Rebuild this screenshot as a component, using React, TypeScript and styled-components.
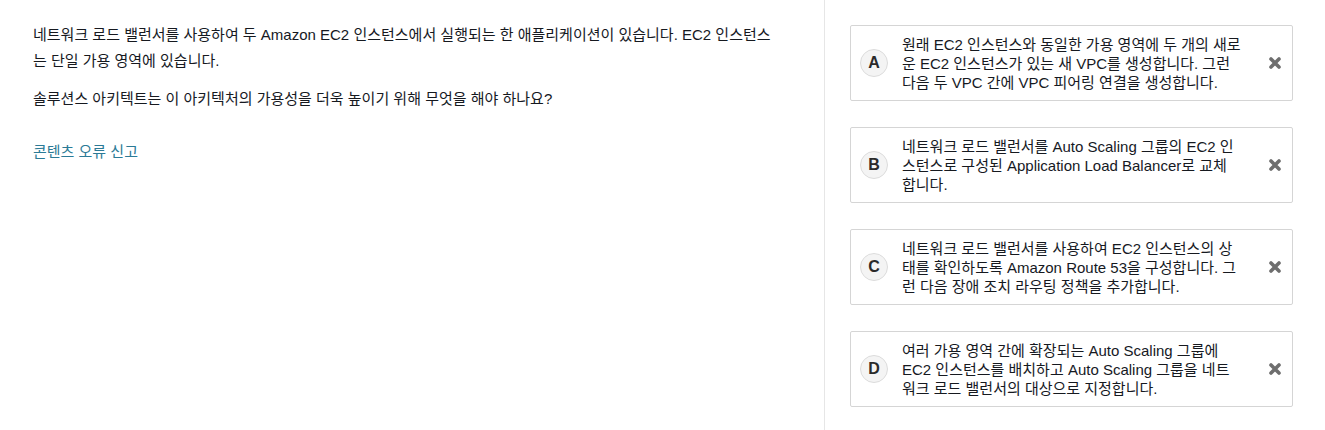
import React from "react";
import styled, { createGlobalStyle } from "styled-components";

const Global = createGlobalStyle`
  html, body { margin: 0; padding: 0; background: #fff; }
  body {
    font-family: "Liberation Sans", Arial, "Noto Sans CJK KR", sans-serif;
    color: #16191f;
    -webkit-font-smoothing: antialiased;
  }
`;

const Page = styled.div`
  display: flex;
  width: 1325px;
  min-height: 430px;
`;

const QuestionPane = styled.section`
  width: 825px;
  box-sizing: border-box;
  padding: 22px 33px 0 33px;
  border-right: 1px solid #e6e6e6;
`;

const QuestionBody = styled.div`
  max-width: 745px;
`;

const Para = styled.p`
  margin: 0 0 12px 0;
  font-size: 15px;
  line-height: 26px;
`;

const ReportLink = styled.a`
  display: inline-block;
  margin-top: 18px;
  font-size: 15px;
  line-height: 20px;
  color: #2b7a96;
  text-decoration: none;
`;

const AnswerPane = styled.section`
  flex: 1;
  box-sizing: border-box;
  padding: 25px 32px 0 25px;
  display: flex;
  flex-direction: column;
  gap: 26px;
`;

const Card = styled.div`
  display: flex;
  align-items: center;
  height: 76px;
  box-sizing: border-box;
  border: 1px solid #d5d5d5;
  border-radius: 2px;
  padding: 0 10px 0 9px;
`;

const Letter = styled.span`
  flex: none;
  width: 26px;
  height: 26px;
  border-radius: 50%;
  border: 1px solid #dcdcdc;
  background: #f4f4f4;
  display: flex;
  align-items: center;
  justify-content: center;
  font-size: 16px;
  font-weight: 700;
  color: #2a2a2a;
  margin-right: 14px;
`;

const AnswerText = styled.div`
  flex: 1;
  max-width: 350px;
  font-size: 15px;
  line-height: 19px;
  color: #16191f;
  white-space: pre-line;
`;

const Remove = styled.span`
  margin-left: auto;
  width: 14px;
  height: 14px;
  display: flex;
`;

const XIcon = () => (
  <svg width="14" height="14" viewBox="0 0 14 14">
    <path
      d="M3 3 L11 11 M11 3 L3 11"
      stroke="#6e6e6e"
      strokeWidth="3.6"
      strokeLinecap="round"
    />
  </svg>
);

const answers = [
  {
    key: "A",
    lines: [
      "원래 EC2 인스턴스와 동일한 가용 영역에 두 개의 새로",
      "운 EC2 인스턴스가 있는 새 VPC를 생성합니다. 그런",
      "다음 두 VPC 간에 VPC 피어링 연결을 생성합니다.",
    ],
  },
  {
    key: "B",
    lines: [
      "네트워크 로드 밸런서를 Auto Scaling 그룹의 EC2 인",
      "스턴스로 구성된 Application Load Balancer로 교체",
      "합니다.",
    ],
  },
  {
    key: "C",
    lines: [
      "네트워크 로드 밸런서를 사용하여 EC2 인스턴스의 상",
      "태를 확인하도록 Amazon Route 53을 구성합니다. 그",
      "런 다음 장애 조치 라우팅 정책을 추가합니다.",
    ],
  },
  {
    key: "D",
    lines: [
      "여러 가용 영역 간에 확장되는 Auto Scaling 그룹에",
      "EC2 인스턴스를 배치하고 Auto Scaling 그룹을 네트",
      "워크 로드 밸런서의 대상으로 지정합니다.",
    ],
  },
];

export default function App() {
  return (
    <Page>
      <Global />
      <QuestionPane>
        <QuestionBody>
          <Para>
            네트워크 로드 밸런서를 사용하여 두 Amazon EC2 인스턴스에서 실행되는 한 애플리케이션이 있습니다. EC2 인스턴스는 단일 가용 영역에 있습니다.
          </Para>
          <Para>솔루션스 아키텍트는 이 아키텍처의 가용성을 더욱 높이기 위해 무엇을 해야 하나요?</Para>
          <ReportLink href="#">콘텐츠 오류 신고</ReportLink>
        </QuestionBody>
      </QuestionPane>
      <AnswerPane>
        {answers.map((a) => (
          <Card key={a.key}>
            <Letter>{a.key}</Letter>
            <AnswerText>{a.lines.join("\n")}</AnswerText>
            <Remove>
              <XIcon />
            </Remove>
          </Card>
        ))}
      </AnswerPane>
    </Page>
  );
}
